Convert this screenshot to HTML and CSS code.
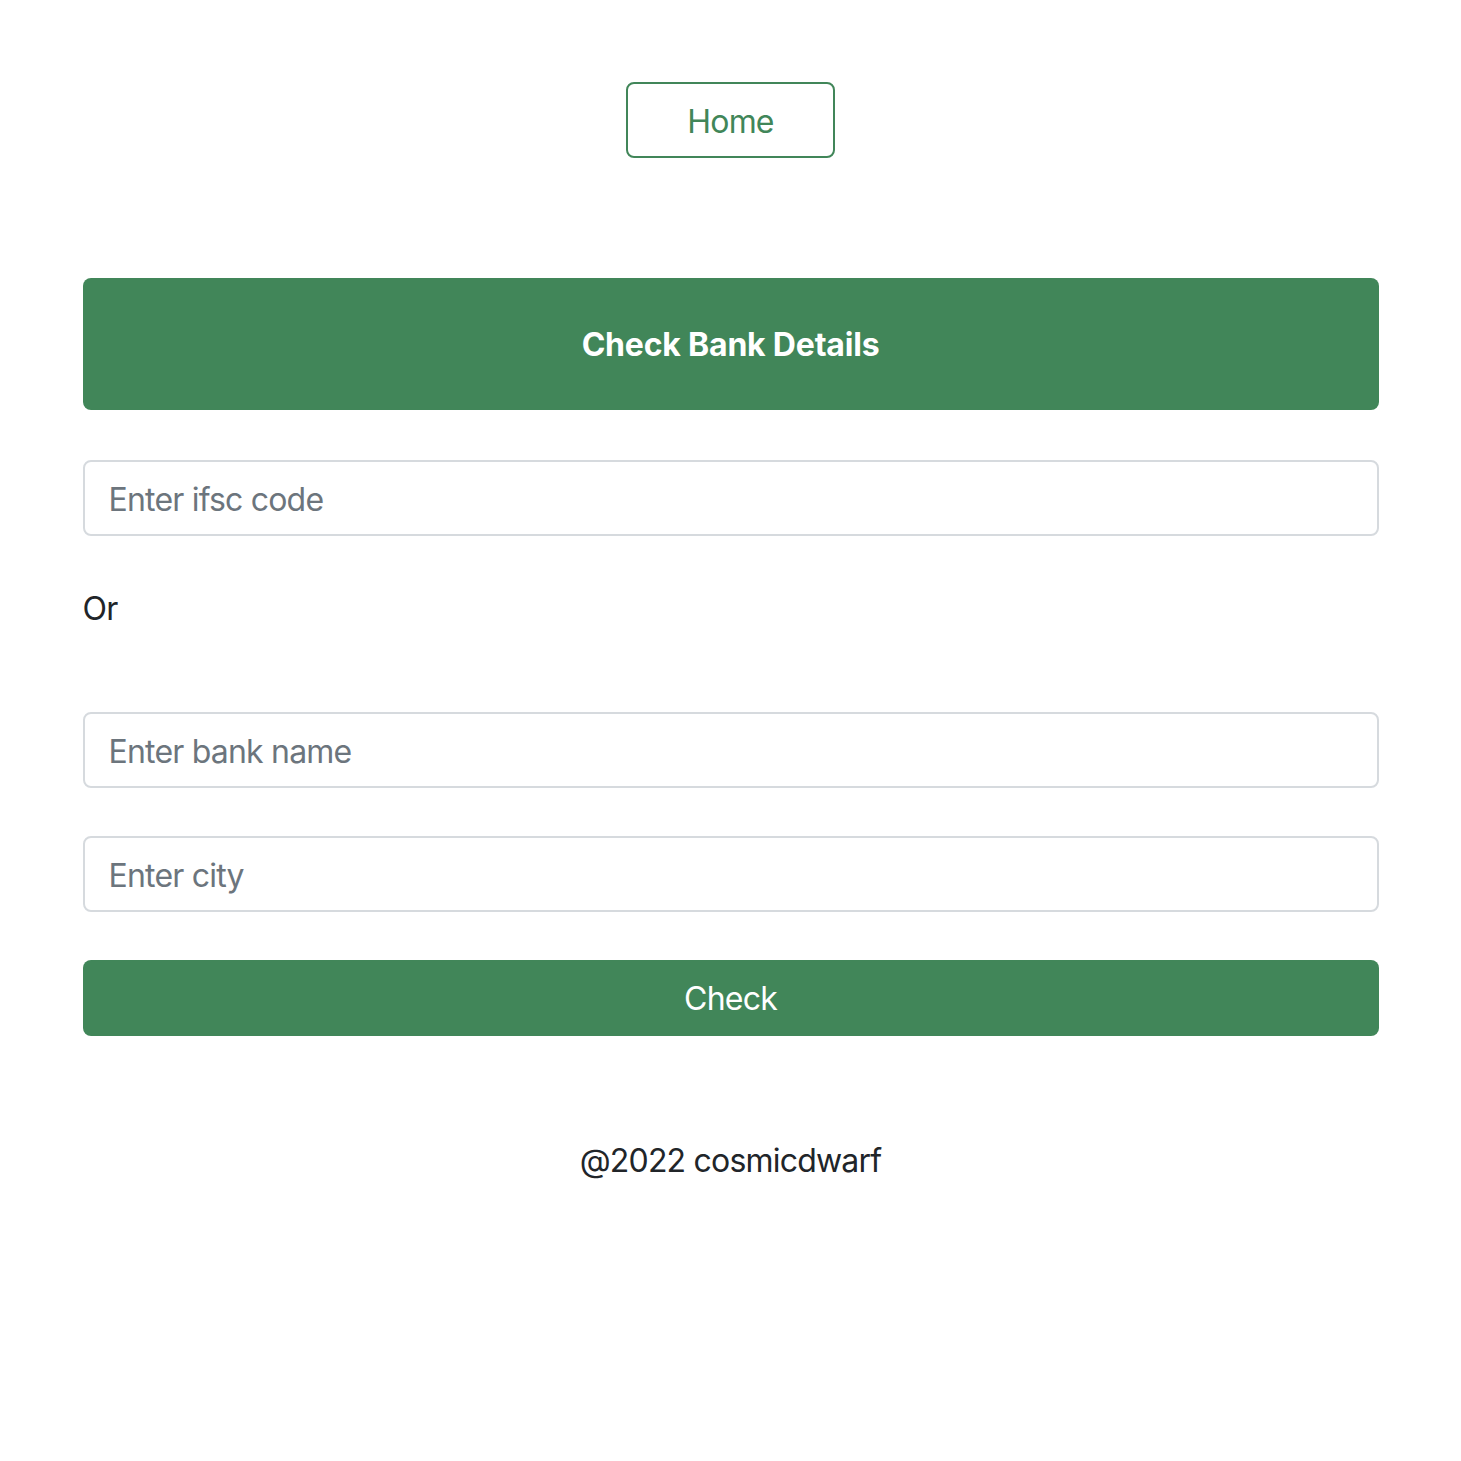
FILE: index.html
```html
<!DOCTYPE html>
<html lang="en">
<head>
<meta charset="utf-8">
<title>Check Bank Details</title>
<link rel="stylesheet" href="styles.css">
</head>
<body>
<div class="page">
  <nav class="nav">
    <a class="btn-home" href="#">Home</a>
  </nav>
  <main class="main">
    <div class="banner">Check Bank Details</div>
    <input class="field field-first" type="text" placeholder="Enter ifsc code">
    <p class="or">Or</p>
    <input class="field" type="text" placeholder="Enter bank name">
    <input class="field field-gap" type="text" placeholder="Enter city">
    <button class="btn-check" type="button">Check</button>
  </main>
  <footer class="footer">@2022 cosmicdwarf</footer>
</div>
</body>
</html>
```
FILE: styles.css
```css
* { box-sizing: border-box; }
html, body { margin: 0; padding: 0; background: #fff; }
body {
  font-family: Inter, "Noto Sans", "Liberation Sans", sans-serif;
  color: #212529;
  font-size: 32px;
  line-height: 48px;
  letter-spacing: -0.8px;
}
.page { padding-top: 82px; }
.nav { display: flex; justify-content: center; }
.btn-home {
  display: flex; align-items: center; justify-content: center;
  width: 209px; height: 76px;
  padding-top: 3px;
  border: 2px solid #418659;
  border-radius: 8px;
  color: #418659;
  text-decoration: none;
  font-size: 32px;
}
.main {
  width: 1296px;
  margin: 120px auto 0;
  display: flex;
  flex-direction: column;
}
.banner {
  background: #418659;
  color: #fff;
  font-weight: 700;
  letter-spacing: -0.2px;
  text-align: center;
  height: 132px;
  padding-top: 2px;
  display: flex; align-items: center; justify-content: center;
  border-radius: 8px;
  font-size: 32px;
}
.field {
  height: 76px;
  border: 2px solid #d6dade;
  border-radius: 8px;
  padding: 2px 24px 0;
  font-family: inherit;
  font-size: 32px;
  letter-spacing: -0.8px;
  color: #212529;
  background: #fff;
  outline: none;
}
.field::placeholder { color: #6c757d; }
.field-first { margin-top: 50px; }
.or { margin: 48px 0 79px; font-size: 32px; line-height: 48px; padding-top: 1px; }
.field-gap { margin-top: 48px; }
.btn-check {
  margin-top: 48px;
  height: 76px;
  padding-top: 2px;
  background: #418659;
  color: #fff;
  border: none;
  border-radius: 8px;
  font-family: inherit;
  font-size: 32px;
  letter-spacing: -0.8px;
}
.footer {
  text-align: center;
  margin-top: 100px;
  padding-top: 1px;
  font-size: 32px;
  line-height: 48px;
}
```
